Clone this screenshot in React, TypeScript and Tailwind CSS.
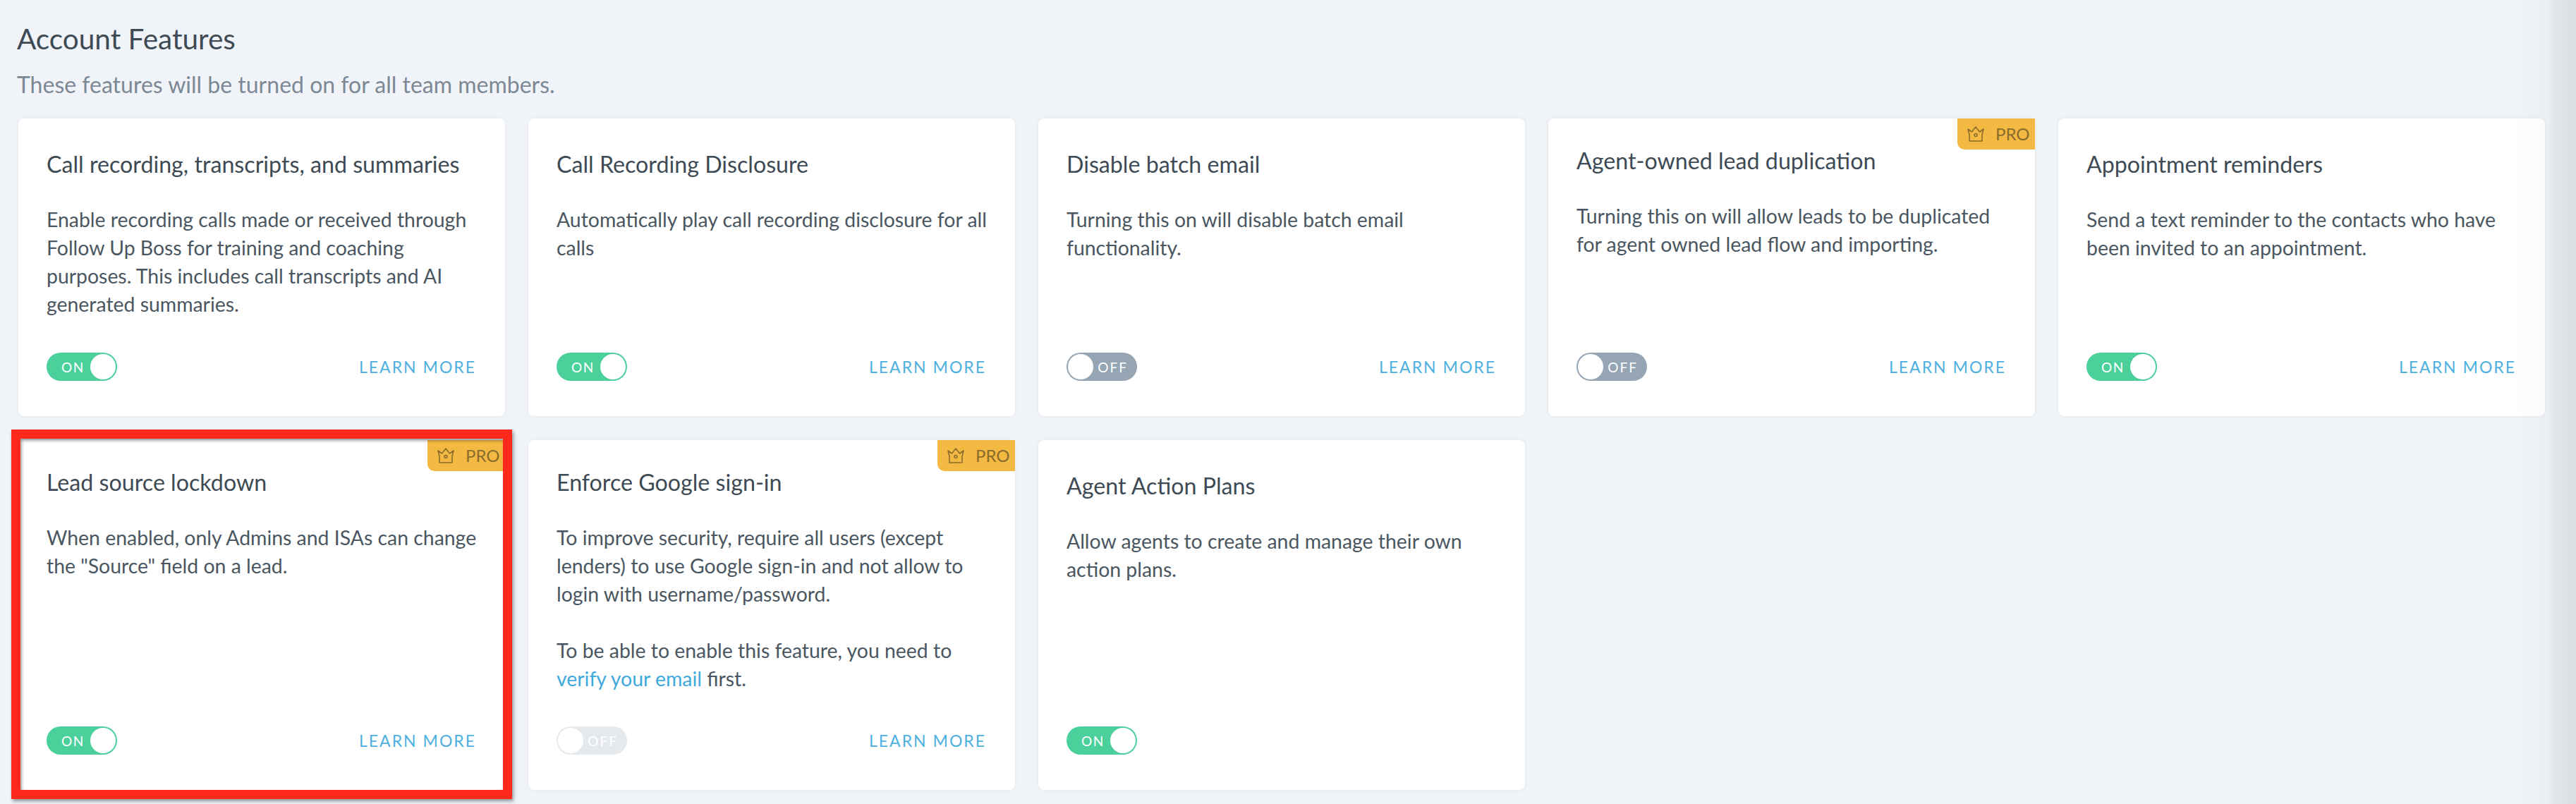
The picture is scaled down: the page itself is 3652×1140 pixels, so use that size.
import React from 'react';

type Feature = {
  title: string;
  body: React.ReactNode;
  state: 'on' | 'off' | 'disabled';
  pro?: boolean;
  learnMore?: boolean;
  highlighted?: boolean;
};

const features: Feature[] = [
  {
    title: 'Call recording, transcripts, and summaries',
    body: 'Enable recording calls made or received through Follow Up Boss for training and coaching purposes. This includes call transcripts and AI generated summaries.',
    state: 'on',
    learnMore: true,
  },
  {
    title: 'Call Recording Disclosure',
    body: 'Automatically play call recording disclosure for all calls',
    state: 'on',
    learnMore: true,
  },
  {
    title: 'Disable batch email',
    body: 'Turning this on will disable batch email functionality.',
    state: 'off',
    learnMore: true,
  },
  {
    title: 'Agent-owned lead duplication',
    body: 'Turning this on will allow leads to be duplicated for agent owned lead flow and importing.',
    state: 'off',
    pro: true,
    learnMore: true,
  },
  {
    title: 'Appointment reminders',
    body: 'Send a text reminder to the contacts who have been invited to an appointment.',
    state: 'on',
    learnMore: true,
  },
  {
    title: 'Lead source lockdown',
    body: 'When enabled, only Admins and ISAs can change the "Source" field on a lead.',
    state: 'on',
    pro: true,
    learnMore: true,
    highlighted: true,
  },
  {
    title: 'Enforce Google sign-in',
    body: (
      <>
        <p>To improve security, require all users (except lenders) to use Google sign-in and not allow to login with username/password.</p>
        <p className="mt-[40px]">
          To be able to enable this feature, you need to <span className="text-[#3fa9dc]">verify your email</span> first.
        </p>
      </>
    ),
    state: 'disabled',
    pro: true,
    learnMore: true,
  },
  {
    title: 'Agent Action Plans',
    body: 'Allow agents to create and manage their own action plans.',
    state: 'on',
  },
];

function Crown() {
  return (
    <svg viewBox="0 0 26 24" className="w-[26px] h-[24px]" fill="none" stroke="#8a6c2c" strokeWidth="1.6" strokeLinejoin="round">
      <path d="M4 13 L2 5 L7.5 9 L13 2 L18.5 9 L24 5 L22 13 L22 22 L4 22 Z" />
      <circle cx="13" cy="13.5" r="2" />
    </svg>
  );
}

function Toggle({ state }: { state: Feature['state'] }) {
  if (state === 'on') {
    return (
      <div className="w-[100px] h-[40px] rounded-full bg-[#4bd09c] flex items-center justify-between pl-[21px] pr-[2px]">
        <span className="text-[19px] leading-none tracking-[1.5px] text-white">ON</span>
        <span className="w-[36px] h-[36px] rounded-full bg-white" />
      </div>
    );
  }
  const disabled = state === 'disabled';
  return (
    <div className={`w-[100px] h-[40px] rounded-full flex items-center justify-between pl-[2px] pr-[13px] ${disabled ? 'bg-[#e6e9ec]' : 'bg-[#95a5b3]'}`}>
      <span className="w-[36px] h-[36px] rounded-full bg-white" />
      <span className="text-[19px] leading-none tracking-[2px] text-white">OFF</span>
    </div>
  );
}

function FeatureCard({ feature }: { feature: Feature }) {
  return (
    <div className="relative flex flex-col rounded-[8px] bg-white px-[40px] pb-[50px] shadow-[0_0_5px_rgba(0,0,0,0.06)]">
      {feature.pro && (
        <div className="absolute top-0 right-0 w-[110px] h-[44px] rounded-bl-[10px] bg-[#f4b942] flex items-center gap-[15px] pl-[13px]">
          <Crown />
          <span className="text-[24px] leading-none text-[#8a6c2c]">PRO</span>
        </div>
      )}
      <h3 className={`text-[32.2px] leading-[40px] text-[#3e4a54] ${feature.pro ? 'mt-[40px]' : 'mt-[45px]'}`}>{feature.title}</h3>
      <div className="mt-[38px] text-[28.4px] leading-[40px] text-[#4a5660]">{feature.body}</div>
      <div className="mt-auto flex items-center justify-between pr-[1px]">
        <Toggle state={feature.state} />
        {feature.learnMore && <span className="text-[23px] leading-none tracking-[2px] text-[#4fb0e0]">LEARN MORE</span>}
      </div>
      {feature.highlighted && (
        <div className="absolute -left-[10px] -right-[10px] -top-[15px] -bottom-[13px] border-[13px] border-[#ff2a1c] pointer-events-none shadow-[2px_3px_5px_rgba(0,0,0,0.4),inset_2px_3px_4px_rgba(0,0,0,0.35)]" />
      )}
    </div>
  );
}

export default function App() {
  return (
    <div className="relative w-[3652px] h-[1140px] overflow-hidden bg-[#f0f4f9] font-['Lato',sans-serif] pl-[24px] pr-[44px]">
      <h1 className="pt-[32px] text-[40.5px] leading-[46px] text-[#3e4a54]">Account Features</h1>
      <p className="mt-[19px] text-[32px] leading-[46px] text-[#7c8893]">These features will be turned on for all team members.</p>
      <div className="mt-[25px] ml-[2px] grid grid-cols-5 grid-rows-[422px_496px] gap-x-[33px] gap-y-[34px]">
        {features.map((feature) => (
          <FeatureCard key={feature.title} feature={feature} />
        ))}
      </div>
      <div className="absolute top-0 bottom-0 right-0 w-[90px] pointer-events-none bg-[linear-gradient(to_right,rgba(0,0,0,0),rgba(0,0,0,0.02)_55%,rgba(0,0,0,0.055)_65%,rgba(0,0,0,0.09))]" />
    </div>
  );
}
